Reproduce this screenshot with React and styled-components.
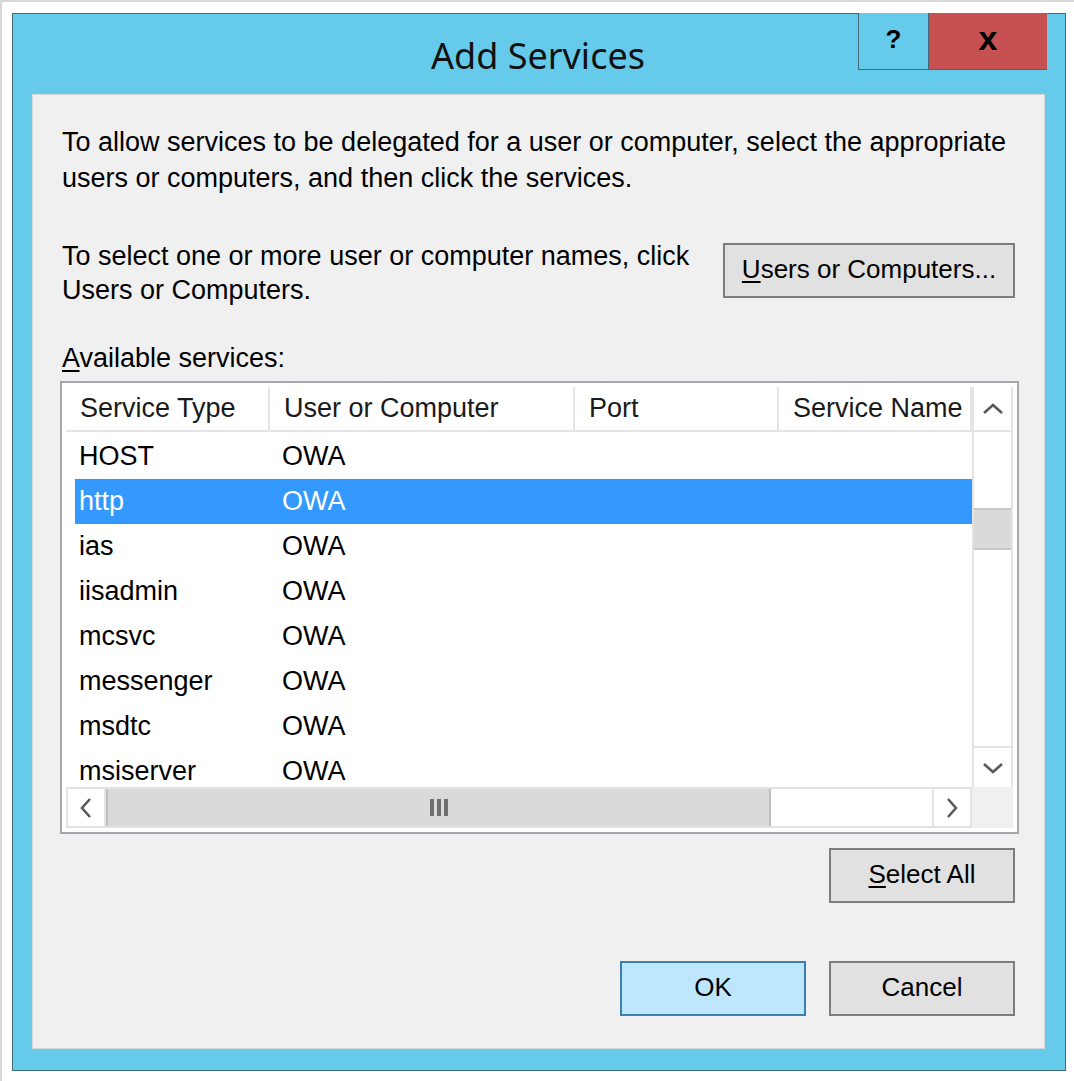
import React from "react";
import styled, { createGlobalStyle } from "styled-components";

const Global = createGlobalStyle`
  html, body { margin: 0; padding: 0; background: #ffffff; }
  * { box-sizing: border-box; }
`;

const Page = styled.div`
  width: 1074px;
  height: 1081px;
  border-top: 2px solid #d8d8d8;
  border-left: 2px solid #d8d8d8;
  padding: 11px 0 0 10px;
  font-family: "Liberation Sans", Arial, sans-serif;
  color: #000;
`;

const Window = styled.div`
  width: 1054px;
  height: 1058px;
  border: 1px solid #3d6b7b;
  background: #66cbea;
  display: flex;
  flex-direction: column;
  padding: 0 20px 21px 19px;
`;

const TitleBar = styled.div`
  position: relative;
  height: 80px;
  margin: 0 -20px 0 -19px;
  display: flex;
  align-items: center;
  justify-content: center;
`;

const Title = styled.div`
  font-family: "Noto Sans", "Open Sans", sans-serif;
  font-size: 36px;
  color: #111;
  margin-left: -2px;
  margin-top: 2px;
`;

const CaptionButtons = styled.div`
  position: absolute;
  top: -1px;
  right: 18px;
  display: flex;
  height: 57px;
  border-bottom: 1px solid #3d6b7b;
`;

const CaptionButton = styled.div`
  width: ${(p) => p.$w}px;
  height: 100%;
  background: ${(p) => p.$bg};
  border-left: ${(p) => (p.$edge ? "1px solid #3d6b7b" : "none")};
  display: flex;
  align-items: center;
  justify-content: center;
  font-family: "Liberation Sans", Arial, sans-serif;
  font-weight: bold;
  font-size: ${(p) => p.$fs}px;
  color: #000;
  padding-bottom: ${(p) => p.$pb}px;
`;

const Content = styled.div`
  flex: 1;
  background: #f0f0f0;
  border: 1px solid #d4d8da;
  padding: 29px 29px 30px 29px;
  display: flex;
  flex-direction: column;
  font-size: 27px;
`;

const Para = styled.p`
  margin: 0;
  line-height: 36px;
`;

const SelectRow = styled.div`
  display: flex;
  align-items: flex-start;
  justify-content: space-between;
  margin-top: 43px;
`;

const SelectText = styled.p`
  margin: 0;
  line-height: 34px;
`;

const Button = styled.div`
  width: ${(p) => p.$w}px;
  height: 55px;
  background: ${(p) => (p.$primary ? "#bee6fd" : "#e1e1e1")};
  border: 2px solid ${(p) => (p.$primary ? "#3c7fb1" : "#7d7d7d")};
  display: flex;
  align-items: center;
  justify-content: center;
  font-size: 26px;
  flex-shrink: 0;
  padding-bottom: 2px;
`;

const Key = styled.span`
  text-decoration: underline;
  text-underline-offset: 3px;
`;

const Label = styled.div`
  margin-top: 34px;
  line-height: 34px;
`;

const ListBox = styled.div`
  margin-top: 6px;
  margin-left: -2px;
  margin-right: -4px;
  height: 453px;
  border: 2px solid #a3a6ab;
  background: #ffffff;
  padding: 4px 4px 4px 4px;
  display: grid;
  grid-template-columns: 1fr 41px;
  grid-template-rows: 1fr 41px;
`;

const MainArea = styled.div`
  overflow: hidden;
  display: flex;
  flex-direction: column;
`;

const Header = styled.div`
  display: grid;
  grid-template-columns: 204px 305px 204px 1fr;
  height: 45px;
  flex-shrink: 0;
`;

const HeaderCell = styled.div`
  border-right: 2px solid #e5e5e5;
  border-bottom: 2px solid #e5e5e5;
  padding-left: ${(p) => p.$pad}px;
  display: flex;
  align-items: center;
  white-space: nowrap;
  overflow: hidden;
  color: #1a1a1a;
`;

const Rows = styled.div`
  padding-top: 2px;
`;

const Row = styled.div`
  display: grid;
  grid-template-columns: 195px 1fr;
  height: 45px;
  margin-left: 9px;
  align-items: center;
  background: ${(p) => (p.$selected ? "#3399ff" : "transparent")};
  color: ${(p) => (p.$selected ? "#ffffff" : "#000000")};
  outline: ${(p) => (p.$selected ? "1px dotted #c8741e" : "none")};
  outline-offset: -1px;
`;

const Cell = styled.div`
  padding-left: ${(p) => p.$pad}px;
  white-space: nowrap;
`;

const VScroll = styled.div`
  border-left: 2px solid #e3e3e3;
  border-right: 2px solid #e3e3e3;
  display: flex;
  flex-direction: column;
  background: #ffffff;
`;

const ScrollButton = styled.div`
  width: 100%;
  height: ${(p) => p.$h || 41}px;
  display: flex;
  align-items: center;
  justify-content: center;
  background: #ffffff;
  border-${(p) => p.$side}: 2px solid #e3e3e3;
  flex-shrink: 0;
`;

const Track = styled.div`
  flex: ${(p) => (p.$fixed ? `0 0 ${p.$fixed}px` : "1")};
  background: #ffffff;
`;

const VThumb = styled.div`
  height: 42px;
  background: #dadada;
  border-top: 2px solid #c8c8c8;
  border-bottom: 2px solid #c8c8c8;
  flex-shrink: 0;
`;

const HScroll = styled.div`
  display: flex;
  border-top: 2px solid #e3e3e3;
  border-bottom: 2px solid #e3e3e3;
  background: #ffffff;
`;

const HButton = styled.div`
  width: 40px;
  display: flex;
  align-items: center;
  justify-content: center;
  background: #ffffff;
  border-left: 2px solid #e3e3e3;
  border-right: 2px solid #e3e3e3;
  flex-shrink: 0;
`;

const HThumb = styled.div`
  width: 665px;
  background: #dadada;
  border-left: 2px solid #bfbfbf;
  border-right: 2px solid #bfbfbf;
  display: flex;
  align-items: center;
  justify-content: center;
  flex-shrink: 0;
`;

const Grip = styled.div`
  display: flex;
  gap: 3px;
  span {
    width: 4px;
    height: 17px;
    background: #6e6e6e;
  }
`;

const Corner = styled.div`
  background: #f0f0f0;
`;

const RightRow = styled.div`
  display: flex;
  justify-content: flex-end;
  gap: 23px;
  margin-top: ${(p) => p.$mt}px;
`;

const Chevron = ({ dir }) => {
  const paths = {
    up: "M2 11 L11 3 L20 11",
    down: "M2 3 L11 11 L20 3",
    left: "M11 2 L3 11 L11 20",
    right: "M3 2 L11 11 L3 20",
  };
  const vertical = dir === "up" || dir === "down";
  return (
    <svg
      width={vertical ? 22 : 14}
      height={vertical ? 14 : 22}
      viewBox={vertical ? "0 0 22 14" : "0 0 14 22"}
    >
      <path d={paths[dir]} fill="none" stroke="#5a5a5a" strokeWidth="2.6" />
    </svg>
  );
};

const services = [
  "HOST",
  "http",
  "ias",
  "iisadmin",
  "mcsvc",
  "messenger",
  "msdtc",
  "msiserver",
];

export default function App() {
  return (
    <Page>
      <Global />
      <Window>
        <TitleBar>
          <Title>Add Services</Title>
          <CaptionButtons>
            <CaptionButton $w={70} $bg="#66cbea" $edge $fs={26} $pb={4}>
              ?
            </CaptionButton>
            <CaptionButton $w={119} $bg="#c75050" $edge $fs={34} $pb={6}>
              x
            </CaptionButton>
          </CaptionButtons>
        </TitleBar>
        <Content>
          <Para>
            To allow services to be delegated for a user or computer, select the appropriate
            <br />
            users or computers, and then click the services.
          </Para>
          <SelectRow>
            <SelectText>
              To select one or more user or computer names, click
              <br />
              Users or Computers.
            </SelectText>
            <Button $w={292} style={{ marginTop: 4 }}>
              <span>
                <Key>U</Key>sers or Computers...
              </span>
            </Button>
          </SelectRow>
          <Label>
            <Key>A</Key>vailable services:
          </Label>
          <ListBox>
            <MainArea>
              <Header>
                <HeaderCell $pad={14}>Service Type</HeaderCell>
                <HeaderCell $pad={14}>User or Computer</HeaderCell>
                <HeaderCell $pad={14}>Port</HeaderCell>
                <HeaderCell $pad={14}>Service Name</HeaderCell>
              </Header>
              <Rows>
                {services.map((s) => (
                  <Row key={s} $selected={s === "http"}>
                    <Cell $pad={4}>{s}</Cell>
                    <Cell $pad={12}>OWA</Cell>
                  </Row>
                ))}
              </Rows>
            </MainArea>
            <VScroll>
              <ScrollButton $side="bottom" $h={45}>
                <Chevron dir="up" />
              </ScrollButton>
              <Track $fixed={76} />
              <VThumb />
              <Track />
              <ScrollButton $side="top" $h={41}>
                <Chevron dir="down" />
              </ScrollButton>
            </VScroll>
            <HScroll>
              <HButton>
                <Chevron dir="left" />
              </HButton>
              <HThumb>
                <Grip>
                  <span />
                  <span />
                  <span />
                </Grip>
              </HThumb>
              <Track />
              <HButton>
                <Chevron dir="right" />
              </HButton>
            </HScroll>
            <Corner />
          </ListBox>
          <RightRow $mt={14}>
            <Button $w={186}>
              <span>
                <Key>S</Key>elect All
              </span>
            </Button>
          </RightRow>
          <RightRow $mt={58}>
            <Button $w={186} $primary>
              OK
            </Button>
            <Button $w={186}>Cancel</Button>
          </RightRow>
        </Content>
      </Window>
    </Page>
  );
}
